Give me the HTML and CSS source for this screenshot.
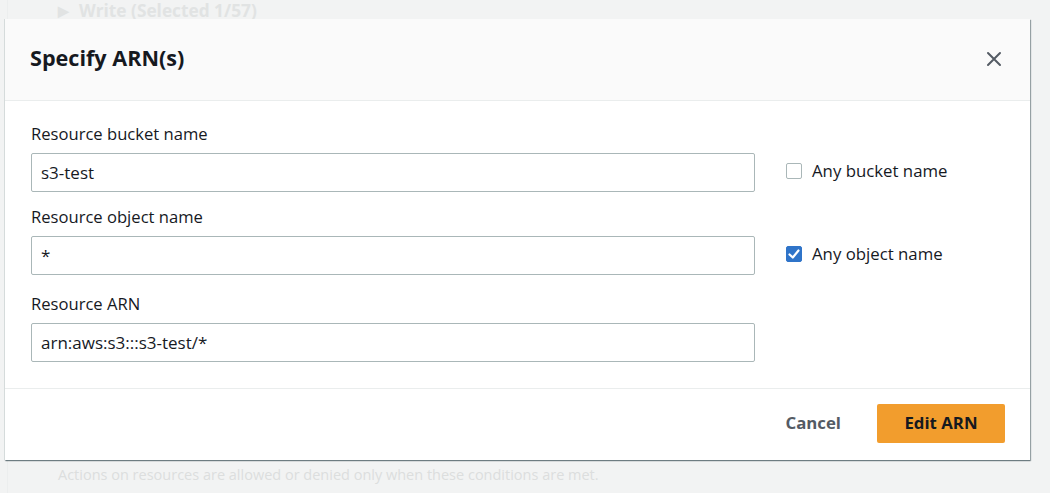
FILE: index.html
```html
<!DOCTYPE html>
<html lang="en">
<head>
<meta charset="utf-8">
<title>Specify ARN(s)</title>
<link rel="stylesheet" href="styles.css">
</head>
<body>
<div class="page">
  <div class="page-inner">
    <div class="bg-section">
      <span class="bg-caret">&#9654;</span>
      <span class="bg-title">Write (Selected 1/57)</span>
    </div>
    <div class="bg-spacer"></div>
    <div class="bg-note">Actions on resources are allowed or denied only when these conditions are met.</div>
  </div>
  <div class="bg-side"></div>
</div>

<div class="modal" role="dialog" aria-labelledby="modal-title">
  <header class="modal-header">
    <h2 id="modal-title" class="modal-title">Specify ARN(s)</h2>
    <button class="close-btn" aria-label="Close">
      <svg width="16" height="16" viewBox="0 0 16 16" aria-hidden="true"><path d="M2 2 L14 14 M14 2 L2 14" stroke="#545b64" stroke-width="2" fill="none" stroke-linecap="round"/></svg>
    </button>
  </header>
  <div class="modal-body">
    <div class="group">
      <div class="field">
        <label class="label">Resource bucket name</label>
        <div class="input">s3-test</div>
      </div>
      <div class="option">
        <span class="checkbox"></span>
        <span class="option-text">Any bucket name</span>
      </div>
    </div>
    <div class="group group-2">
      <div class="field">
        <label class="label">Resource object name</label>
        <div class="input">*</div>
      </div>
      <div class="option">
        <span class="checkbox checked">
          <svg width="16" height="16" viewBox="0 0 16 16" aria-hidden="true"><path d="M3.5 8.5 L6.8 11.5 L12.5 4.5" stroke="#fff" stroke-width="2.2" fill="none" stroke-linecap="round" stroke-linejoin="round"/></svg>
        </span>
        <span class="option-text">Any object name</span>
      </div>
    </div>
    <div class="group group-3">
      <div class="field">
        <label class="label">Resource ARN</label>
        <div class="input">arn:aws:s3:::s3-test/*</div>
      </div>
    </div>
  </div>
  <footer class="modal-footer">
    <button class="btn-link">Cancel</button>
    <button class="btn-primary">Edit ARN</button>
  </footer>
</div>
</body>
</html>
```

FILE: styles.css
```css
* { box-sizing: border-box; }

html, body {
  margin: 0;
  padding: 0;
  width: 1050px;
  height: 493px;
  overflow: hidden;
}

body {
  background: #f2f3f3;
  font-family: "Open Sans", "Noto Sans", sans-serif;
  color: #16191f;
  position: relative;
}

.page {
  display: flex;
  height: 493px;
}

.page-inner {
  flex: 1;
  margin-left: 7px;
  border-left: 1px solid #eceeee;
  display: flex;
  flex-direction: column;
  padding-left: 50px;
}

.bg-section {
  height: 21px;
  display: flex;
  align-items: center;
  gap: 10px;
  font-weight: 700;
  font-size: 17.3px;
  color: #e1e3e3;
}

.bg-caret { font-size: 14px; }

.bg-spacer { flex: 1; }

.bg-note {
  font-size: 14.5px;
  color: #dcdede;
  height: 33px;
  line-height: 30px;
}

.bg-side {
  width: 20px;
}

.modal {
  position: absolute;
  left: 5px;
  top: 19px;
  width: 1025px;
  height: 441px;
  background: #fff;
  display: flex;
  flex-direction: column;
  box-shadow: -1px 0 0 #d5dbdb, 1px 1px 1px rgba(0, 28, 36, 0.35), 0 1px 1px rgba(0, 28, 36, 0.3);
}

.modal-header {
  height: 82px;
  background: #fafafa;
  border-bottom: 1px solid #eaeded;
  display: flex;
  align-items: center;
  justify-content: space-between;
  padding: 0 28px 4px 25px;
}

.modal-title {
  margin: 0;
  font-size: 21.6px;
  font-weight: 700;
  line-height: 26px;
  color: #16191f;
}

.close-btn {
  border: 0;
  background: none;
  padding: 0;
  margin-top: 2px;
  width: 16px;
  height: 16px;
  display: flex;
  cursor: pointer;
}

.modal-body {
  padding: 22px 0 26px 26px;
  border-bottom: 1px solid #eaeded;
  display: flex;
  flex-direction: column;
}

.group {
  display: flex;
  align-items: flex-end;
  gap: 31px;
}

.group-2 { margin-top: 14px; }
.group-3 { margin-top: 18px; }

.field {
  width: 724px;
  display: flex;
  flex-direction: column;
}

.label {
  font-size: 16.6px;
  line-height: 22px;
  margin-bottom: 8px;
  color: #16191f;
}

.input {
  height: 39px;
  border: 1px solid #aab7b8;
  border-radius: 2px;
  padding: 0 9px;
  font-size: 17px;
  line-height: 37px;
  color: #16191f;
}

.option {
  height: 39px;
  margin-bottom: 2px;
  display: flex;
  align-items: center;
  gap: 10px;
  font-size: 16.8px;
  color: #16191f;
}

.checkbox {
  width: 16px;
  height: 16px;
  border: 1px solid #aab7b8;
  border-radius: 2px;
  background: #fff;
  display: flex;
}

.checkbox.checked {
  background: #2f74c9;
  border-color: #2f74c9;
}

.checkbox.checked svg { margin: -1px; }

.modal-footer {
  flex: 1;
  display: flex;
  align-items: center;
  justify-content: flex-end;
  padding: 0 25px 2px;
  gap: 16px;
}

.btn-link {
  border: 0;
  background: none;
  font-family: inherit;
  font-size: 16.8px;
  font-weight: 700;
  color: #545b64;
  padding: 6px 20px 8px;
  cursor: pointer;
}

.btn-primary {
  height: 39px;
  width: 128px;
  border: 0;
  border-radius: 2px;
  background: #f29d2d;
  font-family: inherit;
  font-size: 16.8px;
  font-weight: 700;
  color: #16191f;
  padding: 0 0 2px;
  cursor: pointer;
}
```
